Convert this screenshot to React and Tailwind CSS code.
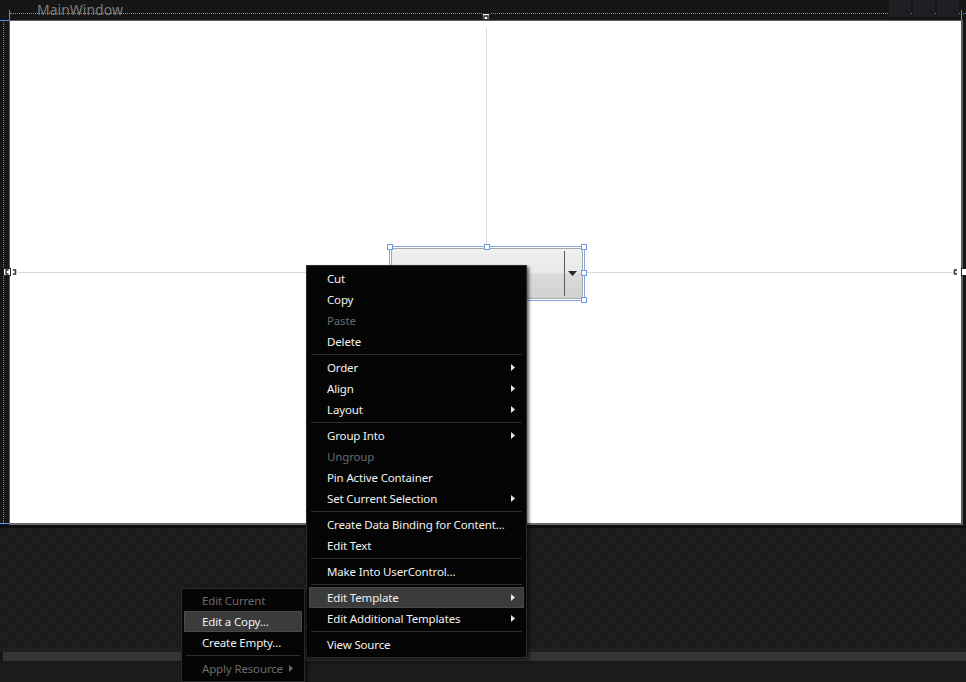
import React from 'react';

const mainItems = [
  { label: 'Cut' },
  { label: 'Copy' },
  { label: 'Paste', disabled: true },
  { label: 'Delete' },
  { sep: true },
  { label: 'Order', sub: true },
  { label: 'Align', sub: true },
  { label: 'Layout', sub: true },
  { sep: true },
  { label: 'Group Into', sub: true },
  { label: 'Ungroup', disabled: true },
  { label: 'Pin Active Container' },
  { label: 'Set Current Selection', sub: true },
  { sep: true },
  { label: 'Create Data Binding for Content...' },
  { label: 'Edit Text' },
  { sep: true },
  { label: 'Make Into UserControl...' },
  { sep: true },
  { label: 'Edit Template', sub: true, active: true },
  { label: 'Edit Additional Templates', sub: true },
  { sep: true },
  { label: 'View Source' },
];

const subItems = [
  { label: 'Edit Current', disabled: true },
  { label: 'Edit a Copy...', active: true },
  { label: 'Create Empty...' },
  { sep: true },
  { label: 'Apply Resource', sub: true, disabled: true },
];

const Arrow = ({ dim }) => (
  <svg width="4" height="7" viewBox="0 0 4 7" className="shrink-0">
    <path d="M0 0 L4 3.5 L0 7 Z" fill={dim ? '#6a6a6a' : '#e6e6e6'} />
  </svg>
);

const MenuRow = ({ item }) => {
  if (item.sep) {
    return (
      <div className="h-[5px] flex items-center px-[2px]">
        <div className="h-px w-full bg-[#2e2e2e]" />
      </div>
    );
  }
  return (
    <div
      className={`h-[21px] flex items-center justify-between pl-[17px] pr-[8px] border ${
        item.active ? 'bg-[#3b3b3b] border-[#4a4a4a]' : 'border-transparent'
      } ${item.disabled ? 'text-[#6b6b6b]' : 'text-[#f2f2f2]'}`}
    >
      <span className="leading-[21px] whitespace-nowrap">{item.label}</span>
      {item.sub && <Arrow dim={item.disabled} />}
    </div>
  );
};

const ContextMenu = ({ items, className }) => (
  <div
    className={`absolute bg-[#050505] border border-[#2b2b2b] shadow-[2px_2px_3px_rgba(0,0,0,0.6)] p-[2px] text-[11.5px] tracking-[-0.15px] ${className}`}
  >
    {items.map((item, i) => (
      <MenuRow key={i} item={item} />
    ))}
  </div>
);

export default function App() {
  return (
    <div
      className="relative w-[966px] h-[682px] overflow-hidden flex flex-col bg-[#1b1b1b]"
      style={{ fontFamily: '"Noto Sans", "Open Sans", sans-serif' }}
    >
      {/* title strip */}
      <div className="relative h-[20px] bg-[#161616] shrink-0">
        <span className="absolute left-[37px] top-[1px] text-[14px] leading-[17px] text-[#7d7d7d]">MainWindow</span>
        <div className="absolute left-[10px] right-0 top-[13px] border-t border-dotted border-[#6c8fd8]" />
        <div className="absolute left-[9px] top-[10px] h-[10px] w-px bg-[#5b8ee8]" />
        <div className="absolute left-[961px] top-[10px] h-[10px] w-px bg-[#5b8ee8]" />
        <div className="absolute right-[7px] top-0 flex gap-[2px]">
          <div className="w-[22px] h-[17px] bg-[#1f1f23]" />
          <div className="w-[22px] h-[17px] bg-[#1f1f23]" />
          <div className="w-[22px] h-[17px] bg-[#1f1f23]" />
        </div>
        <svg width="8" height="15" viewBox="0 0 8 15" className="absolute left-[482px] top-[13px]">
          <rect x="0.5" y="0.5" width="7" height="6" fill="#ffffff" stroke="#2a2a2a" />
          <path d="M2 6 V3 H6 V6" fill="none" stroke="#222" strokeWidth="1.4" />
          <path d="M2 9 V12.5 H6 V9" fill="none" stroke="#333" strokeWidth="1.5" />
        </svg>
      </div>

      {/* design surface row */}
      <div className="flex h-[505px] shrink-0">
        <div className="relative w-[9px] bg-[#161616]">
          <div className="absolute left-[3px] top-0 bottom-[2px] border-l border-dotted border-[#6c8fd8]" />
          <div className="absolute left-0 top-0 w-[9px] h-px bg-[#5b8ee8]" />
          <div className="absolute left-0 top-[503px] w-[9px] h-px bg-[#5b8ee8]" />
        </div>
        <div className="relative w-[954px] h-[505px] bg-white border-l border-t border-[#5e5e5e] border-r-2 border-b-2 border-r-[#5e5e5e] border-b-[#6a6a6a]">
          {/* grid rails */}
          <div className="absolute left-[476px] top-[7px] h-[218px] w-px bg-[#d9d9d9]" />
          <div className="absolute left-[8px] right-[8px] top-[251px] h-px bg-[#d9d9d9]" />

          {/* combobox */}
          <div className="absolute left-[379px] top-[225px] w-[196px] h-[55px] border border-[#7fa6ea] p-px">
            <div className="relative w-full h-full rounded-[3px] border border-[#a8a8a8] bg-[linear-gradient(#f0f0f0_0%,#e8e8e8_48%,#dadada_52%,#d2d2d2_100%)] flex justify-end">
              <div className="w-px my-[2px] bg-[#5a5a5a] mr-[17px]" />
              <svg width="9" height="5" viewBox="0 0 9 5" className="absolute right-[5px] top-[22px]">
                <path d="M0 0 H9 L4.5 5 Z" fill="#1d2836" />
              </svg>
            </div>
            {[
              'left-[-3px] top-[-3px]',
              'left-[94px] top-[-3px]',
              'right-[-3px] top-[-3px]',
              'right-[-3px] top-[23px]',
              'right-[-3px] bottom-[-3px]',
            ].map((pos, i) => (
              <div key={i} className={`absolute ${pos} w-[6px] h-[6px] bg-white border border-[#6d98e4]`} />
            ))}
          </div>
        </div>
        <div className="w-[3px] bg-[#161616]" />
      </div>

      {/* rail markers on horizontal line */}
      <svg width="16" height="8" viewBox="0 0 16 8" className="absolute left-[3px] top-[268px]">
        <rect x="0.5" y="0.5" width="7" height="7" fill="#fff" stroke="#222" />
        <path d="M5.5 2 H3 V6 H5.5" fill="none" stroke="#222" strokeWidth="1.3" />
        <path d="M10 2 H12.5 V6 H10" fill="none" stroke="#333" strokeWidth="1.5" />
      </svg>
      <svg width="14" height="8" viewBox="0 0 14 8" className="absolute left-[952px] top-[268px]">
        <path d="M5 2 H2.5 V6 H5" fill="none" stroke="#333" strokeWidth="1.5" />
        <rect x="9.5" y="0.5" width="6" height="7" fill="#fff" stroke="#222" />
      </svg>

      {/* bottom checker */}
      <div className="h-[3px] bg-[#0f0f0f] shrink-0" />
      <div className="flex-1 bg-[image:repeating-conic-gradient(#1e1e1e_0_25%,#1a1a1a_0_50%)] bg-size-[16px_16px]" />
      <div className="h-[4px] bg-[#202020] shrink-0" />
      <div className="h-[9px] bg-[#161616] pl-[3px] shrink-0">
        <div className="h-full bg-[#343434]" />
      </div>
      <div className="h-[4px] bg-[#181818] shrink-0" />
      <div className="h-[17px] bg-[#1c1c1f] shrink-0" />

      <ContextMenu items={mainItems} className="left-[306px] top-[265px] w-[221px]" />
      <ContextMenu items={subItems} className="left-[181px] top-[588px] w-[124px] pt-[1px]" />
    </div>
  );
}
